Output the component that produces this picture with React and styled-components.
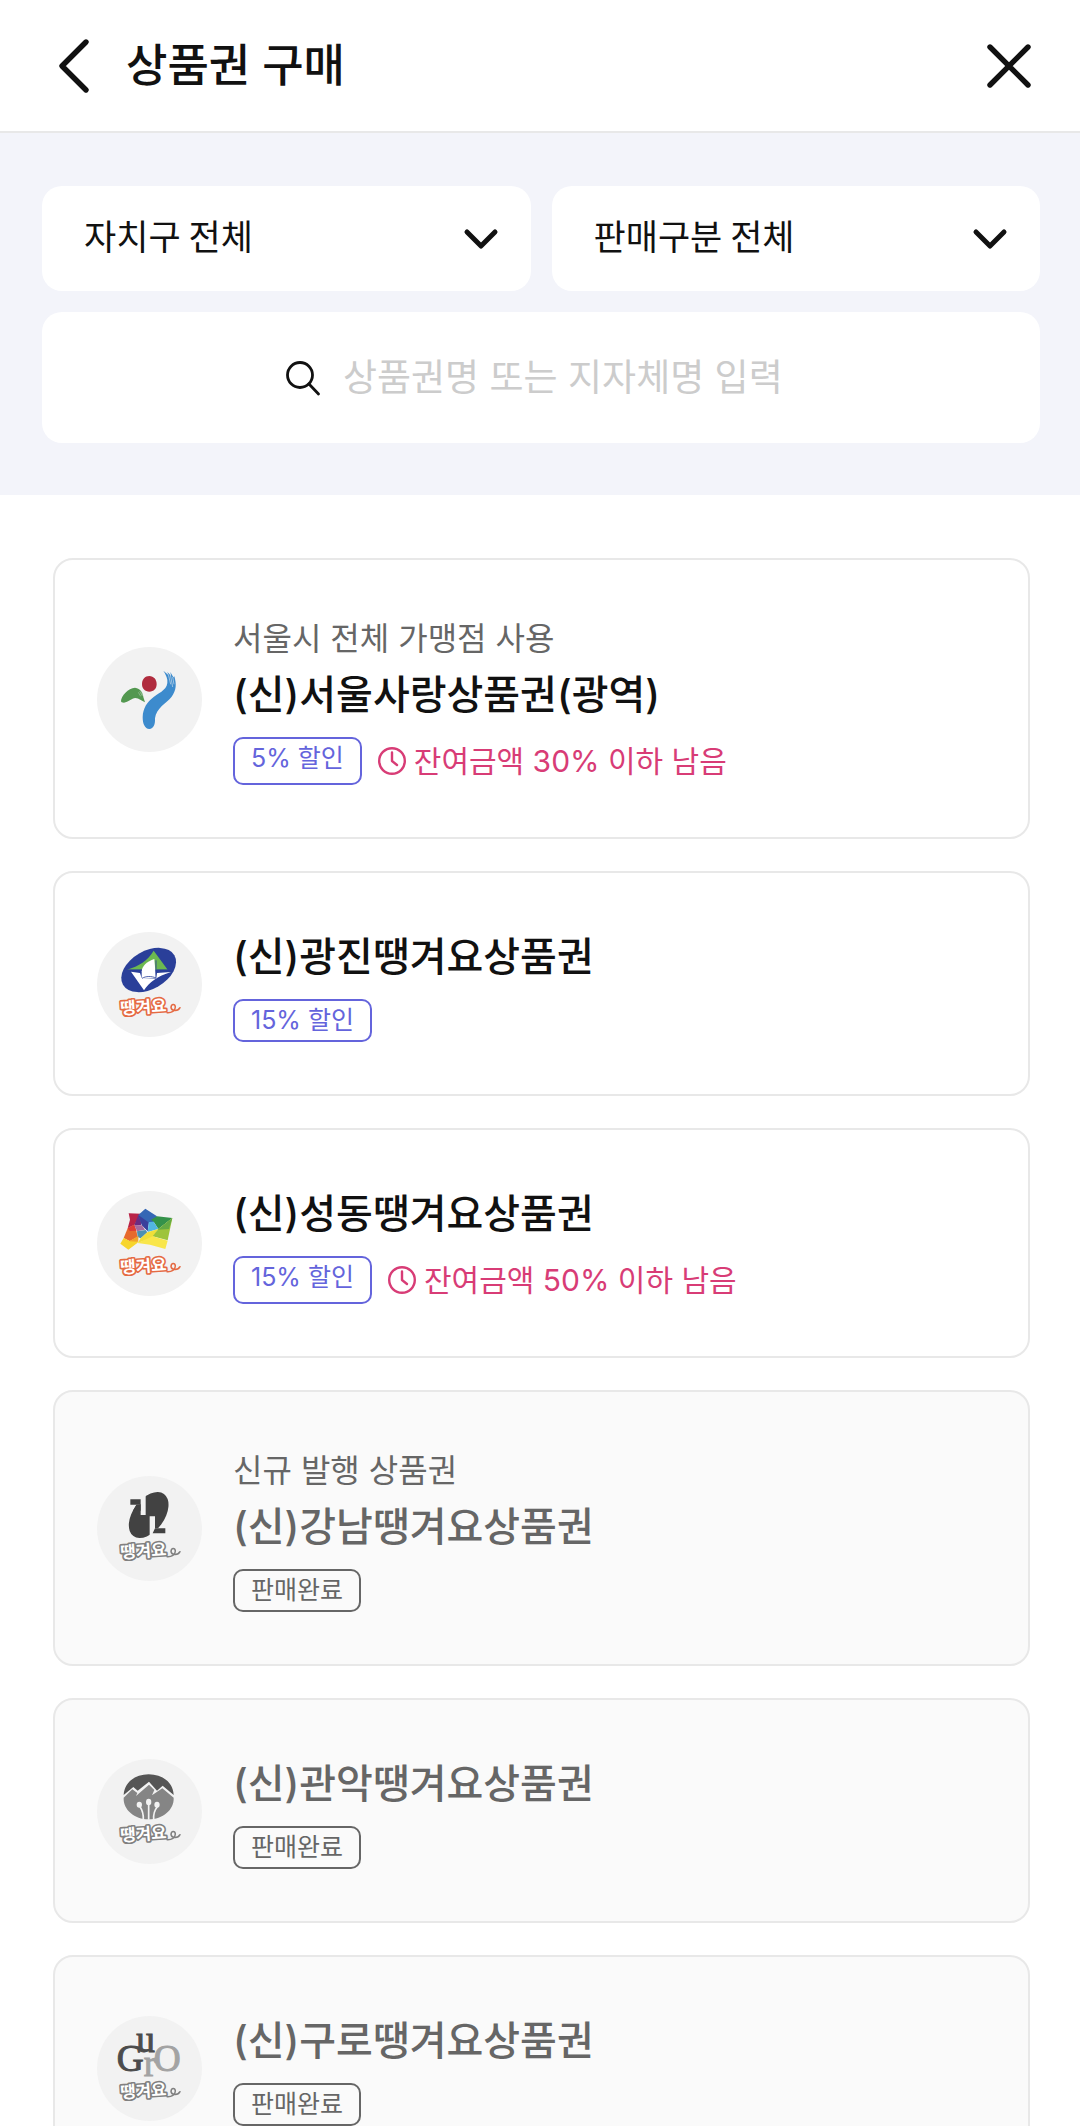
import React from "react";
import styled, { createGlobalStyle } from "styled-components";

const korean = '"Noto Sans CJK KR", "Noto Sans", sans-serif';
const mixed = 'Inter, "Noto Sans CJK KR", sans-serif';

const GlobalStyle = createGlobalStyle`
  *, *::before, *::after { box-sizing: border-box; }
  body { margin: 0; background: #fff; color: #111; font-family: ${mixed}; }
  h1, h2, p, ul { margin: 0; padding: 0; }
`;

const Shell = styled.div`
  display: flex;
  flex-direction: column;
  height: 100vh;
  overflow: hidden;
`;

const Header = styled.header`
  display: flex;
  align-items: center;
  flex-shrink: 0;
  padding: 32px 47px 31px 56px;
  border-bottom: 2px solid #e8e8e8;
`;

const IconButton = styled.button`
  display: flex;
  padding: 0;
  border: 0;
  background: none;
  color: #111;
  cursor: pointer;
`;

const PageTitle = styled.h1`
  flex: 1;
  margin-left: 33px;
  font-size: 45px;
  font-weight: 500;
  line-height: 68px;
`;

const Scroller = styled.main`
  flex: 1;
  min-height: 0;
  overflow-y: auto;
  scrollbar-width: none;
`;

const Filters = styled.form`
  display: grid;
  grid-template-columns: 1fr 1fr;
  gap: 21px;
  padding: 53px 40px 52px 42px;
  background: #f3f4fa;
`;

const SelectBox = styled.label`
  display: grid;
  align-items: center;
  border-radius: 20px;
  background: #fff;

  & > * { grid-area: 1 / 1; }
  & > svg { justify-self: end; margin-right: 32px; pointer-events: none; }
`;

const Select = styled.select`
  appearance: none;
  width: 100%;
  height: 105px;
  padding: 0 80px 8px 42px;
  border: 0;
  border-radius: 20px;
  background: none;
  color: #111;
  font-family: ${korean};
  font-size: 35px;
`;

const SearchBox = styled.label`
  grid-column: 1 / -1;
  display: flex;
  align-items: center;
  justify-content: center;
  gap: 22px;
  height: 131px;
  border-radius: 20px;
  background: #fff;
`;

const SearchInput = styled.input`
  width: 454px;
  padding: 0;
  border: 0;
  outline: 0;
  background: none;
  color: #111;
  font-family: ${mixed};
  font-size: 37px;
  line-height: 56px;

  &::placeholder { color: #ccc; opacity: 1; }
`;

const VoucherList = styled.ul`
  display: flex;
  flex-direction: column;
  gap: 32px;
  padding: 63px 50px 64px 53px;
  list-style: none;
`;

const Card = styled.li`
  display: flex;
  align-items: center;
  gap: 31px;
  padding: 53px 42px 52px;
  border: 2px solid #e8e8e8;
  border-radius: 20px;
  background: ${(p) => (p.$soldOut ? "#fafafa" : "#fff")};
  color: ${(p) => (p.$soldOut ? "#666" : "#111")};
`;

const LogoCircle = styled.div`
  display: flex;
  flex-shrink: 0;
  width: 105px;
  height: 105px;
  border-radius: 50%;
  background: #f2f2f2;
  overflow: hidden;
`;

const Info = styled.div`
  display: flex;
  flex-direction: column;
`;

const Note = styled.p`
  color: #666;
  font-size: 32px;
  line-height: 51px;
`;

const Name = styled.h2`
  font-size: 40px;
  font-weight: 500;
  line-height: 62px;
`;

const Meta = styled.div`
  display: flex;
  gap: 16px;
  margin-top: 11px;
`;

const Badge = styled.span`
  padding: 0 16px;
  border: 2px solid currentColor;
  border-radius: 10px;
  color: ${(p) => (p.$soldOut ? "#666" : "#6464dc")};
  font-size: 25px;
  line-height: 39px;
`;

const Remaining = styled.span`
  display: flex;
  align-items: center;
  gap: 8px;
  color: #d83c76;
  font-size: 30px;
  line-height: 48px;
`;

const BackIcon = () => (
  <svg width="37" height="60" viewBox="0 0 37 60" fill="none" stroke="currentColor" strokeWidth="5.4" strokeLinecap="round" strokeLinejoin="round" aria-hidden="true">
    <path d="M30 6 L6 30 L30 54" />
  </svg>
);

const CloseIcon = () => (
  <svg width="48" height="48" viewBox="0 0 48 48" fill="none" stroke="currentColor" strokeWidth="5.4" strokeLinecap="round" aria-hidden="true">
    <path d="M5 5 L43 43 M43 5 L5 43" />
  </svg>
);

const ChevronIcon = () => (
  <svg width="36" height="22" viewBox="0 0 36 22" fill="none" stroke="#111" strokeWidth="5" strokeLinecap="round" strokeLinejoin="round" aria-hidden="true">
    <path d="M4 4 L18 18 L32 4" />
  </svg>
);

const SearchIcon = () => (
  <svg width="36" height="36" viewBox="0 0 36 36" fill="none" stroke="#111" strokeWidth="2.8" strokeLinecap="round" aria-hidden="true">
    <circle cx="15" cy="15" r="12.5" />
    <path d="M24 24 L33.5 34" />
  </svg>
);

const ClockIcon = () => (
  <svg width="28" height="28" viewBox="0 0 28 28" fill="none" stroke="currentColor" strokeWidth="2.4" strokeLinecap="round" strokeLinejoin="round" aria-hidden="true">
    <circle cx="14" cy="14" r="12.8" />
    <path d="M14 5.5 V14 L19 18" />
  </svg>
);

const Wordmark = ({ color }) => (
  <g strokeLinejoin="round" strokeLinecap="round">
    <text
      fontFamily={korean}
      fontWeight="700"
      fontSize="50"
      fill="#fff"
      stroke={color}
      strokeWidth="10"
      paintOrder="stroke"
      transform="rotate(-4 200 270)"
      x="122"
      y="290"
    >
      땡겨요
    </text>
    <path d="M262 290 C276 291 287 284 287 273 C286 263 275 263 274 274 C275 285 294 288 301 275" fill="none" stroke={color} strokeWidth="4.5" />
  </g>
);

const Art = ({ children }) => (
  <svg width="105" height="105" viewBox="52 48 315 315" aria-hidden="true">
    {children}
  </svg>
);

const SeoulLogo = () => (
  <Art>
    <path d="M124 210 C124 196 146 170 166 170 C183 172 190 186 191 198 L196 214 C186 209 178 202 167 201 C156 202 146 213 133 215 C127 215 124 213 124 210 Z" fill="#539850" />
    <path d="M180 180 l7 14 M176 184 l7 12 M186 184 l3 10" stroke="#f2f2f2" strokeWidth="1" />
    <path d="M209 135 C222 135 231 146 231 159 C231 173 222 182 209 182 C196 182 187 173 187 159 C187 145 196 135 209 135 Z" fill="#b02c3e" />
    <path d="M251 119 L266 132 L263 123 L274 134 L272 123 L281 139 L284 136 C291 160 290 178 276 197 C260 217 230 230 226 262 C227 280 222 294 209 294 C195 293 189 278 189 258 C190 232 202 213 222 198 C244 182 266 174 263 147 C261 134 256 128 251 119 Z" fill="#3d8bcd" />
    <path d="M266 130 L273 160 M272 131 L279 168 M279 138 L283 160" stroke="#f2f2f2" strokeWidth="1.6" />
  </Art>
);

const GwangjinLogo = () => (
  <Art>
    <ellipse cx="207" cy="162" rx="89" ry="57" transform="rotate(-30 207 162)" fill="#2a3f99" />
    <path d="M222 104 L264 161 H142 C178 150 204 134 222 104 Z" fill="#6cb850" />
    <path d="M186 166 C187 149 202 137 224 129 L229 187 L186 187 Z" fill="#fff" />
    <path d="M154 167 L181 171 L186 186 L228 188 L232 171 L274 168 C232 181 210 198 193 223 Z" fill="#fff" />
    <path d="M187 187 C198 180 216 180 229 186 V133" fill="none" stroke="#2a3f99" strokeWidth="2.5" />
    <path d="M142 162 H187 M231 162 H270" stroke="#2a3f99" strokeWidth="3" />
    <Wordmark color="#e56a43" />
  </Art>
);

const SeongdongLogo = () => (
  <Art>
    <g transform="translate(0 2)">
      <path d="M147 113 L184 114 L164 148 L144 158 L151 132 Z" fill="#b92347" />
      <path d="M164 148 L176 118 L187 137 L184 148 Z" fill="#6c2c82" />
      <path d="M197 99 L232 122 L222 139 L208 139 L204 166 L187 149 L176 118 Z" fill="#3567b5" />
      <path d="M176 118 L206 140 L204 166 L187 149 Z" fill="#3a3f9b" />
      <path d="M232 122 L278 127 L236 160 L222 138 L214 132 Z" fill="#34924a" />
      <path d="M208 139 L222 138 L236 160 L204 169 Z" fill="#52b6e3" />
      <path d="M144 158 L164 147 L170 165 L174 184 L151 197 L132 187 Z" fill="#e76a2d" />
      <path d="M144 158 L164 147 L170 165 L150 166 Z" fill="#df3b35" />
      <path d="M164 148 L187 149 L196 162 L172 167 Z" fill="#a66b9f" />
      <path d="M172 167 L198 163 L203 170 L183 188 L174 184 Z" fill="#4c91b2" />
      <path d="M132 187 L150 196 L174 183 L174 201 L146 222 L122 204 Z" fill="#f7d52c" />
      <path d="M150 197 L176 180 L176 198 Z" fill="#f2a52b" />
      <path d="M183 188 L203 170 L236 160 L219 186 L174 202 Z" fill="#f0df39" />
      <path d="M278 127 L264 194 L219 182 L236 160 Z" fill="#9dc43b" />
      <path d="M278 127 L268 160 L234 162 Z" fill="#65aa43" />
      <path d="M174 202 L219 182 L264 195 L257 220 L211 207 Z" fill="#f9e64b" />
    </g>
    <Wordmark color="#e56a43" />
  </Art>
);

const GangnamLogo = () => (
  <Art>
    <g transform="translate(0 2)">
      <ellipse cx="207" cy="163" rx="78" ry="47" transform="rotate(-54 207 163)" fill="#424242" />
      <path d="M140 100 H198 V163 H183 V130 L178 132 H140 Z M210 167 H226 V203 H270 V236 H210 Z" fill="#f2f2f2" />
      <path d="M152 116 H183 V132 H152 Z M226 203 H257 V218 H219 Z" fill="#424242" />
      <path d="M170 132 H183 V150 L160 150 Z" fill="#424242" />
    </g>
    <Wordmark color="#808080" />
  </Art>
);

const GwanakLogo = () => (
  <Art>
    <g transform="translate(0 -7)">
      <path d="M132 163 C134 126 165 101 207 101 C249 101 281 126 282 163 L249 135 L232 150 L208 123 L174 150 L161 139 Z" fill="#555" />
      <path d="M132 171 L158 146 L173 157 L169 166 L208 132 L224 148 L217 164 L248 143 L282 171 C284 207 249 236 207 236 C165 236 130 207 132 171 Z" fill="#858585" />
      <g fill="none" stroke="#f2f2f2" strokeWidth="5">
        <path d="M181 198 Q192 214 191 237 M207 190 V237 M233 198 Q220 214 222 237" />
      </g>
      <g fill="#f2f2f2">
        <ellipse cx="179" cy="192" rx="8" ry="9" />
        <ellipse cx="207" cy="184" rx="8" ry="10" />
        <ellipse cx="232" cy="192" rx="8" ry="9" />
      </g>
    </g>
    <Wordmark color="#808080" />
  </Art>
);

const GuroLogo = () => (
  <Art>
    <text fontFamily='"Liberation Serif", serif' fontSize="112" strokeWidth="3">
      <tspan x="111" y="213" fill="#4c4c4c" stroke="#4c4c4c">G</tspan>
      <tspan x="170" y="155" fill="#4c4c4c" stroke="#4c4c4c">u</tspan>
      <tspan x="192" y="228" fill="#a3a3a3" stroke="#a3a3a3">r</tspan>
      <tspan x="222" y="213" fill="#a3a3a3" stroke="#a3a3a3">O</tspan>
    </text>
    <Wordmark color="#808080" />
  </Art>
);

const vouchers = [
  { name: "(신)서울사랑상품권(광역)", note: "서울시 전체 가맹점 사용", badge: "5% 할인", remaining: "잔여금액 30% 이하 남음", Logo: SeoulLogo },
  { name: "(신)광진땡겨요상품권", badge: "15% 할인", Logo: GwangjinLogo },
  { name: "(신)성동땡겨요상품권", badge: "15% 할인", remaining: "잔여금액 50% 이하 남음", Logo: SeongdongLogo },
  { name: "(신)강남땡겨요상품권", note: "신규 발행 상품권", badge: "판매완료", soldOut: true, Logo: GangnamLogo },
  { name: "(신)관악땡겨요상품권", badge: "판매완료", soldOut: true, Logo: GwanakLogo },
  { name: "(신)구로땡겨요상품권", badge: "판매완료", soldOut: true, Logo: GuroLogo },
];

const VoucherCard = ({ name, note, badge, remaining, soldOut, Logo }) => (
  <Card $soldOut={soldOut}>
    <LogoCircle>
      <Logo />
    </LogoCircle>
    <Info>
      {note && <Note>{note}</Note>}
      <Name>{name}</Name>
      <Meta>
        <Badge $soldOut={soldOut}>{badge}</Badge>
        {remaining && (
          <Remaining>
            <ClockIcon />
            {remaining}
          </Remaining>
        )}
      </Meta>
    </Info>
  </Card>
);

export default function App() {
  return (
    <Shell>
      <GlobalStyle />
      <Header>
        <IconButton type="button" aria-label="뒤로">
          <BackIcon />
        </IconButton>
        <PageTitle>상품권 구매</PageTitle>
        <IconButton type="button" aria-label="닫기">
          <CloseIcon />
        </IconButton>
      </Header>
      <Scroller>
        <Filters onSubmit={(e) => e.preventDefault()}>
          <SelectBox>
            <Select aria-label="자치구">
              <option>자치구 전체</option>
            </Select>
            <ChevronIcon />
          </SelectBox>
          <SelectBox>
            <Select aria-label="판매구분">
              <option>판매구분 전체</option>
            </Select>
            <ChevronIcon />
          </SelectBox>
          <SearchBox>
            <SearchIcon />
            <SearchInput type="text" aria-label="상품권 검색" placeholder="상품권명 또는 지자체명 입력" />
          </SearchBox>
        </Filters>
        <VoucherList>
          {vouchers.map((v) => (
            <VoucherCard key={v.name} {...v} />
          ))}
        </VoucherList>
      </Scroller>
    </Shell>
  );
}
